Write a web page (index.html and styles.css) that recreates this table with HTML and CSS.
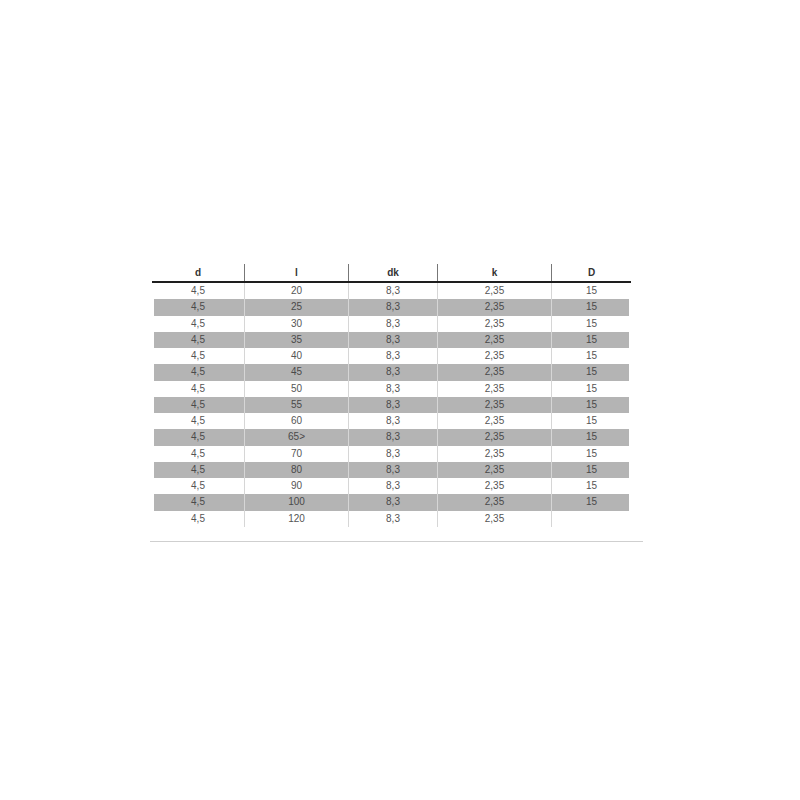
FILE: index.html
```html
<!DOCTYPE html>
<html>
<head>
<meta charset="utf-8">
<link rel="stylesheet" href="styles.css">
</head>
<body>
<div class="sheet">
  <div class="table">
    <div class="row head">
      <div class="c">d</div><div class="c">l</div><div class="c">dk</div><div class="c">k</div><div class="c">D</div>
    </div>
    <div class="row"><div class="c">4,5</div><div class="c">20</div><div class="c">8,3</div><div class="c">2,35</div><div class="c">15</div></div>
    <div class="row alt"><div class="c">4,5</div><div class="c">25</div><div class="c">8,3</div><div class="c">2,35</div><div class="c">15</div></div>
    <div class="row"><div class="c">4,5</div><div class="c">30</div><div class="c">8,3</div><div class="c">2,35</div><div class="c">15</div></div>
    <div class="row alt"><div class="c">4,5</div><div class="c">35</div><div class="c">8,3</div><div class="c">2,35</div><div class="c">15</div></div>
    <div class="row"><div class="c">4,5</div><div class="c">40</div><div class="c">8,3</div><div class="c">2,35</div><div class="c">15</div></div>
    <div class="row alt"><div class="c">4,5</div><div class="c">45</div><div class="c">8,3</div><div class="c">2,35</div><div class="c">15</div></div>
    <div class="row"><div class="c">4,5</div><div class="c">50</div><div class="c">8,3</div><div class="c">2,35</div><div class="c">15</div></div>
    <div class="row alt"><div class="c">4,5</div><div class="c">55</div><div class="c">8,3</div><div class="c">2,35</div><div class="c">15</div></div>
    <div class="row"><div class="c">4,5</div><div class="c">60</div><div class="c">8,3</div><div class="c">2,35</div><div class="c">15</div></div>
    <div class="row alt"><div class="c">4,5</div><div class="c">65&gt;</div><div class="c">8,3</div><div class="c">2,35</div><div class="c">15</div></div>
    <div class="row"><div class="c">4,5</div><div class="c">70</div><div class="c">8,3</div><div class="c">2,35</div><div class="c">15</div></div>
    <div class="row alt"><div class="c">4,5</div><div class="c">80</div><div class="c">8,3</div><div class="c">2,35</div><div class="c">15</div></div>
    <div class="row"><div class="c">4,5</div><div class="c">90</div><div class="c">8,3</div><div class="c">2,35</div><div class="c">15</div></div>
    <div class="row alt"><div class="c">4,5</div><div class="c">100</div><div class="c">8,3</div><div class="c">2,35</div><div class="c">15</div></div>
    <div class="row"><div class="c">4,5</div><div class="c">120</div><div class="c">8,3</div><div class="c">2,35</div><div class="c"></div></div>
  </div>
  <div class="rule"></div>
</div>
</body>
</html>
```

FILE: styles.css
```css
html, body {
  margin: 0;
  padding: 0;
  background: #ffffff;
}
body {
  font-family: "Liberation Sans", Arial, sans-serif;
  font-size: 10px;
  color: #555555;
}
.sheet {
  width: 493px;
  margin-left: 150px;
  padding-top: 264px;
}
.table {
  width: 479px;
  margin-left: 2px;
}
.row {
  display: grid;
  grid-template-columns: 92px 104px 89px 114px 80px;
  height: 16.25px;
}
.row .c {
  display: flex;
  align-items: center;
  justify-content: center;
  line-height: 1;
}
.row .c + .c {
  border-left: 1px solid #d6d6d6;
}
.row.alt {
  background: linear-gradient(#b4b4b4, #b4b4b4) no-repeat 2px 0 / calc(100% - 4px) 100%;
}
.row.alt .c {
  color: #4a4a4a;
}
.row.head {
  height: 17px;
  border-bottom: 2px solid #1e1e1e;
  color: #2a2a2a;
}
.row.head .c {
  font-weight: bold;
  color: #333333;
}
.row.head .c + .c {
  border-left: 1px solid #777777;
}
.rule {
  margin-top: 14px;
  height: 1px;
  background: #cfcfcf;
}
```
